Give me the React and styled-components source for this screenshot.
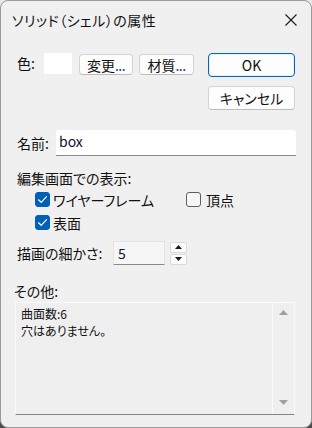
import React from "react";
import styled, { createGlobalStyle } from "styled-components";

const Global = createGlobalStyle`
  html, body { margin: 0; padding: 0; }
  body {
    width: 312px; height: 428px; overflow: hidden;
    background: linear-gradient(#e9e9e9 0%, #cfcfcf 60%, #4a4a4a 100%);
    font-family: "Noto Sans CJK JP", "Noto Sans", sans-serif;
    font-feature-settings: "palt";
    color: #111111;
  }
  * { box-sizing: border-box; }
`;

const Window = styled.div`
  width: 312px;
  height: 428px;
  background: #f0f0f0;
  border: 1px solid #9a9a9a;
  border-radius: 8px;
  display: flex;
  flex-direction: column;
  overflow: hidden;
`;

const TitleBar = styled.div`
  height: 37px;
  display: flex;
  align-items: center;
  justify-content: space-between;
  padding: 0 14px 0 11px;
`;

const Title = styled.div`
  font-size: 14px;
  letter-spacing: 0.5px;
  color: #111111;
`;

const Body = styled.div`
  padding: 15px 15px 0 15px;
  display: flex;
  flex-direction: column;
`;

const TopSection = styled.div`
  display: flex;
  justify-content: space-between;
  align-items: flex-start;
`;

const ColorRow = styled.div`
  display: flex;
  align-items: flex-start;
`;

const Label = styled.span`
  font-size: 14px;
  line-height: ${(p) => p.$lh || 18}px;
  width: ${(p) => (p.$w ? `${p.$w}px` : "auto")};
  margin-left: ${(p) => p.$ml || 0}px;
  flex: none;
  white-space: nowrap;
`;

const Swatch = styled.div`
  width: 28px;
  height: 21px;
  background: #ffffff;
  margin-right: 7px;
`;

const Button = styled.button`
  font-family: inherit;
  font-feature-settings: "palt";
  font-size: 14px;
  color: #111111;
  background: #fdfdfd;
  border: 1px solid ${(p) => (p.$primary ? "#0067c0" : "#d3d3d3")};
  border-bottom-color: ${(p) => (p.$primary ? "#0067c0" : "#bdbdbd")};
  border-radius: 4px;
  height: ${(p) => p.$h || 23}px;
  width: ${(p) => p.$w}px;
  padding: 0;
  margin-right: ${(p) => p.$mr || 0}px;
  margin-top: ${(p) => p.$mt || 0}px;
  display: flex;
  align-items: center;
  justify-content: center;
  line-height: 1;
  box-shadow: ${(p) => (p.$primary ? "inset 0 0 0 1px #e8f1fb" : "none")};
`;

const Dots = styled.span`
  color: #1b3fa0;
  letter-spacing: -0.5px;
`;

const ButtonColumn = styled.div`
  display: flex;
  flex-direction: column;
  gap: 9px;
  margin-right: 1px;
`;

const NameRow = styled.div`
  display: flex;
  align-items: center;
  margin-top: 20px;
  margin-left: 1px;
`;

const TextInput = styled.div`
  flex: 1;
  height: 26px;
  background: #ffffff;
  border-bottom: 1px solid #8c8c8c;
  border-radius: 3px 3px 0 0;
  font-size: 14px;
  display: flex;
  align-items: center;
  padding-left: 3px;
  padding-bottom: 3px;
  color: #101030;
`;

const GroupLabel = styled.div`
  font-size: 14px;
  line-height: 18px;
  margin-top: 13px;
  margin-left: 1px;
`;

const CheckRow = styled.div`
  display: flex;
  align-items: center;
  height: 23px;
  padding-left: 19px;
  margin-top: ${(p) => p.$mt || 0}px;
`;

const CheckItem = styled.label`
  display: flex;
  align-items: center;
  width: ${(p) => (p.$w ? `${p.$w}px` : "auto")};
  font-size: 14px;
`;

const Box = styled.span`
  width: 15px;
  height: 15px;
  border-radius: 3px;
  margin-right: ${(p) => p.$gap || 3}px;
  background: ${(p) => (p.$checked ? "#005fb8" : "#f6f6f6")};
  border: 1px solid ${(p) => (p.$checked ? "#005fb8" : "#5e5e5e")};
  display: flex;
  align-items: center;
  justify-content: center;
  flex: none;
`;

const DetailRow = styled.div`
  display: flex;
  align-items: center;
  margin-top: 7px;
  margin-left: 1px;
`;

const NumInput = styled.div`
  width: 52px;
  height: 24px;
  background: #f6f6f6;
  border: 1px solid #e3e3e3;
  border-bottom: 1px solid #8a8a8a;
  font-size: 14px;
  display: flex;
  align-items: center;
  padding-left: 4px;
  padding-bottom: 1px;
  color: #101030;
`;

const Spin = styled.div`
  display: flex;
  flex-direction: column;
  gap: 1px;
  margin-left: 5px;
`;

const SpinBtn = styled.div`
  width: 17px;
  height: 11px;
  background: #fcfcfc;
  border: 1px solid #dadada;
  border-radius: 2px;
  display: flex;
  align-items: center;
  justify-content: center;
`;

const OtherLabel = styled.div`
  font-size: 14px;
  line-height: 18px;
  margin-top: 17px;
  margin-left: -2px;
`;

const TextArea = styled.div`
  margin-top: 2px;
  margin-left: -1px;
  width: 280px;
  height: 113px;
  display: flex;
  border-top: 1px solid #fbfbfb;
  border-left: 1px solid #fbfbfb;
  border-right: 1px solid #fbfbfb;
  border-bottom: 1px solid #858585;
  background: #efefef;
`;

const TextContent = styled.div`
  flex: 1;
  padding: 2px 0 0 5px;
  font-size: 12px;
  color: #111111;
`;

const TextLine = styled.div`
  height: 17px;
  line-height: 17px;
  font-size: 12px;
`;

const ScrollBar = styled.div`
  width: 22px;
  border-left: 1px solid #fbfbfb;
  display: flex;
  flex-direction: column;
  justify-content: space-between;
  align-items: center;
  padding: 7px 0 9px 0;
`;

const Check = () => (
  <svg width="11" height="9" viewBox="0 0 11 9">
    <path d="M1.5 4.8 L4.2 7.3 L9.5 1.6" fill="none" stroke="#fff" strokeWidth="1.2" strokeLinecap="round" strokeLinejoin="round" />
  </svg>
);

const Tri = ({ up, color = "#1a1a1a", w = 7, h = 4 }) => (
  <svg width={w} height={h} viewBox={`0 0 ${w} ${h}`}>
    <polygon points={up ? `0,${h} ${w / 2},0 ${w},${h}` : `0,0 ${w},0 ${w / 2},${h}`} fill={color} />
  </svg>
);

export default function App() {
  return (
    <>
      <Global />
      <Window>
        <TitleBar>
          <Title>ソリッド（シェル）の属性</Title>
          <svg width="12" height="12" viewBox="0 0 12 12">
            <path d="M0.5 0.5 L11.5 11.5 M11.5 0.5 L0.5 11.5" stroke="#1a1a1a" strokeWidth="1.1" />
          </svg>
        </TitleBar>
        <Body>
          <TopSection>
            <ColorRow>
              <Label $w={27} $lh={21} $ml={1}>色:</Label>
              <Swatch />
              <Button $w={54} $h={21} $mr={6} $mt={1}>変更<Dots>...</Dots></Button>
              <Button $w={55} $h={21} $mt={1}>材質<Dots>...</Dots></Button>
            </ColorRow>
            <ButtonColumn>
              <Button $primary $w={87} $h={24}>OK</Button>
              <Button $w={87} $h={24}>キャンセル</Button>
            </ButtonColumn>
          </TopSection>

          <NameRow>
            <Label $w={39}>名前:</Label>
            <TextInput>box</TextInput>
          </NameRow>

          <GroupLabel>編集画面での表示:</GroupLabel>
          <CheckRow $mt={1}>
            <CheckItem $w={151}>
              <Box $checked><Check /></Box>
              ワイヤーフレーム
            </CheckItem>
            <CheckItem>
              <Box $gap={5} />
              頂点
            </CheckItem>
          </CheckRow>
          <CheckRow>
            <CheckItem>
              <Box $checked><Check /></Box>
              表面
            </CheckItem>
          </CheckRow>

          <DetailRow>
            <Label $w={96}>描画の細かさ:</Label>
            <NumInput>5</NumInput>
            <Spin>
              <SpinBtn><Tri up /></SpinBtn>
              <SpinBtn><Tri /></SpinBtn>
            </Spin>
          </DetailRow>

          <OtherLabel>その他:</OtherLabel>
          <TextArea>
            <TextContent>
              <TextLine>曲面数:6</TextLine>
              <TextLine>穴はありません。</TextLine>
            </TextContent>
            <ScrollBar>
              <Tri up color="#a0a0a0" w={9} h={5} />
              <Tri color="#a0a0a0" w={9} h={5} />
            </ScrollBar>
          </TextArea>
        </Body>
      </Window>
    </>
  );
}
